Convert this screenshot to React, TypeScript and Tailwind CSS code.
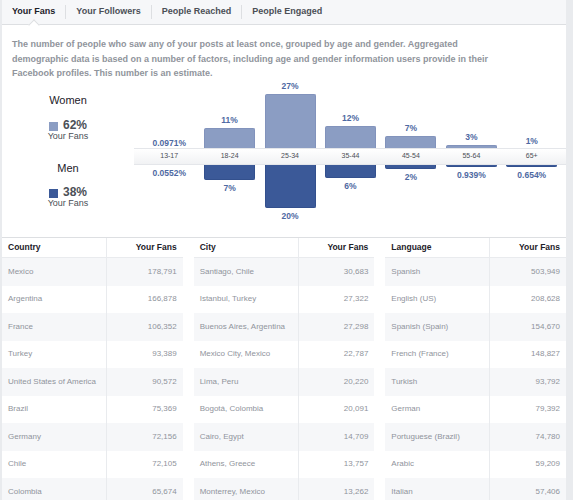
const tabs = ["Your Fans", "Your Followers", "People Reached", "People Engaged"];

const ages = [
  { age: "13-17", women: 0.0971, w: "0.0971%", men: 0.0552, m: "0.0552%" },
  { age: "18-24", women: 11, w: "11%", men: 7, m: "7%" },
  { age: "25-34", women: 27, w: "27%", men: 20, m: "20%" },
  { age: "35-44", women: 12, w: "12%", men: 6, m: "6%" },
  { age: "45-54", women: 7, w: "7%", men: 2, m: "2%" },
  { age: "55-64", women: 3, w: "3%", men: 0.939, m: "0.939%" },
  { age: "65+", women: 1, w: "1%", men: 0.654, m: "0.654%" },
];

const tables = [
  {
    title: "Country",
    rows: [
      ["Mexico", "178,791"],
      ["Argentina", "166,878"],
      ["France", "106,352"],
      ["Turkey", "93,389"],
      ["United States of America", "90,572"],
      ["Brazil", "75,369"],
      ["Germany", "72,156"],
      ["Chile", "72,105"],
      ["Colombia", "65,674"],
    ],
  },
  {
    title: "City",
    rows: [
      ["Santiago, Chile", "30,683"],
      ["Istanbul, Turkey", "27,322"],
      ["Buenos Aires, Argentina", "27,298"],
      ["Mexico City, Mexico", "22,787"],
      ["Lima, Peru", "20,220"],
      ["Bogotá, Colombia", "20,091"],
      ["Cairo, Egypt", "14,709"],
      ["Athens, Greece", "13,757"],
      ["Monterrey, Mexico", "13,262"],
    ],
  },
  {
    title: "Language",
    rows: [
      ["Spanish", "503,949"],
      ["English (US)", "208,628"],
      ["Spanish (Spain)", "154,670"],
      ["French (France)", "148,827"],
      ["Turkish", "93,792"],
      ["German", "79,392"],
      ["Portuguese (Brazil)", "74,780"],
      ["Arabic", "59,209"],
      ["Italian", "57,406"],
    ],
  },
];

function barHeight(pct: number, scale: number) {
  if (pct < 0.5) return 0;
  return Math.max(2, Math.round(pct * scale));
}

function Legend() {
  return (
    <div className="w-[132px] shrink-0 pt-[12.5px] text-center text-[#1d2129]">
      <p className="text-[11px] leading-[14px]">Women</p>
      <div className="mt-[12px] flex items-center justify-center gap-[5px] text-[12px] font-bold leading-[12px] text-[#4b4f56]">
        <span className="mt-[2px] h-[9px] w-[9px] bg-[#8b9dc3]" />
        62%
      </div>
      <p className="mt-[1px] text-[9px] leading-[9px] text-[#4b4f56]">Your Fans</p>
      <p className="mt-[20px] text-[11px] leading-[14px]">Men</p>
      <div className="mt-[11px] flex items-center justify-center gap-[5px] text-[12px] font-bold leading-[12px] text-[#4b4f56]">
        <span className="mt-[2px] h-[9px] w-[9px] bg-[#3b5998]" />
        38%
      </div>
      <p className="mt-[1px] text-[9px] leading-[9px] text-[#4b4f56]">Your Fans</p>
    </div>
  );
}

function AgeChart() {
  return (
    <div className="flex w-[432px] flex-col">
      <div className="grid h-[67.5px] grid-cols-7 pl-[5px] pr-[4px]">
        {ages.map((a) => (
          <div key={a.age} className="flex flex-col items-center justify-end">
            <span className="mb-[3px] text-[8.5px] font-bold leading-[10px] text-[#4e69a2]">{a.w}</span>
            {barHeight(a.women, 2.1) > 0 && (
              <div
                className="w-[51px] rounded-t-[2px] border border-b-0 border-[#8293bc] bg-[#8b9dc3]"
                style={{ height: barHeight(a.women, 2.1) }}
              />
            )}
          </div>
        ))}
      </div>
      <div className="grid h-[17px] grid-cols-7 border-y border-[#e4e6ea] bg-gradient-to-b from-white to-[#f1f2f4] pl-[5px] pr-[4px]">
        {ages.map((a) => (
          <span key={a.age} className="flex items-center justify-center text-[7px] text-[#4b4f56]">
            {a.age}
          </span>
        ))}
      </div>
      <div className="grid h-[72px] grid-cols-7 pl-[5px] pr-[4px]">
        {ages.map((a) => (
          <div key={a.age} className="flex flex-col items-center">
            {barHeight(a.men, 2.17) > 0 && (
              <div
                className="w-[51px] rounded-b-[2px] border border-t-0 border-[#33508d] bg-[#3b5998]"
                style={{ height: barHeight(a.men, 2.17) }}
              />
            )}
            <span className="mt-[3px] text-[8.5px] font-bold leading-[10px] text-[#4e69a2]">{a.m}</span>
          </div>
        ))}
      </div>
    </div>
  );
}

function FansTable({ title, rows }: { title: string; rows: string[][] }) {
  return (
    <div className="grid grid-cols-[105px_1fr]">
      <div className="flex h-[20px] items-center border-b border-r border-[#e9ebee] px-[6px] text-[8.5px] font-bold text-[#1d2129]">
        {title}
      </div>
      <div className="flex h-[20px] items-center justify-end border-b border-[#e9ebee] px-[6px] text-[8.5px] font-bold text-[#1d2129]">
        Your Fans
      </div>
      {rows.map(([name, fans], i) => {
        const bg = i % 2 === 0 ? "bg-[#f6f7f9]" : "bg-white";
        return (
          <div key={name} className="contents">
            <div className={`flex h-[27.5px] items-center border-r border-[#e9ebee] px-[6px] text-[8px] text-[#90949c] ${bg}`}>
              {name}
            </div>
            <div className={`flex h-[27.5px] items-center justify-end px-[6px] text-[8px] text-[#90949c] ${bg}`}>
              {fans}
            </div>
          </div>
        );
      })}
    </div>
  );
}

export default function App() {
  return (
    <div className="flex h-[500px] w-[573px] overflow-hidden bg-[#e9ebee] pl-[2px] pr-[7px] font-['Liberation_Sans',Arial,sans-serif]">
      <div className="flex-1 bg-white">
        <div className="flex h-[25px] items-center border-b border-[#dddfe2] bg-[#f6f7f9]">
          {tabs.map((tab, i) => (
            <div key={tab} className="flex items-center">
              {i > 0 && <span className="h-[14px] w-px bg-[#dddfe2]" />}
              <div
                className={`relative flex h-[24px] items-center px-[10px] text-[9px] font-bold ${
                  i === 0 ? "text-[#1d2129]" : "text-[#4b4f56]"
                }`}
              >
                {tab}
                {i === 0 && (
                  <span className="absolute bottom-[-5px] left-1/2 h-[8px] w-[8px] -translate-x-1/2 rotate-45 border-l border-t border-[#dddfe2] bg-white" />
                )}
              </div>
            </div>
          ))}
        </div>

        <p className="w-[500px] px-[10px] pt-[12px] text-[9px] font-bold leading-[14.5px] text-[#90949c]">
          The number of people who saw any of your posts at least once, grouped by age and gender. Aggregated
          demographic data is based on a number of factors, including age and gender information users provide in
          their Facebook profiles. This number is an estimate.
        </p>

        <div className="flex">
          <Legend />
          <AgeChart />
        </div>

        <div className="grid grid-cols-3 gap-x-[11px] border-t border-[#dddfe2]">
          {tables.map((t) => (
            <FansTable key={t.title} title={t.title} rows={t.rows} />
          ))}
        </div>
      </div>
    </div>
  );
}
